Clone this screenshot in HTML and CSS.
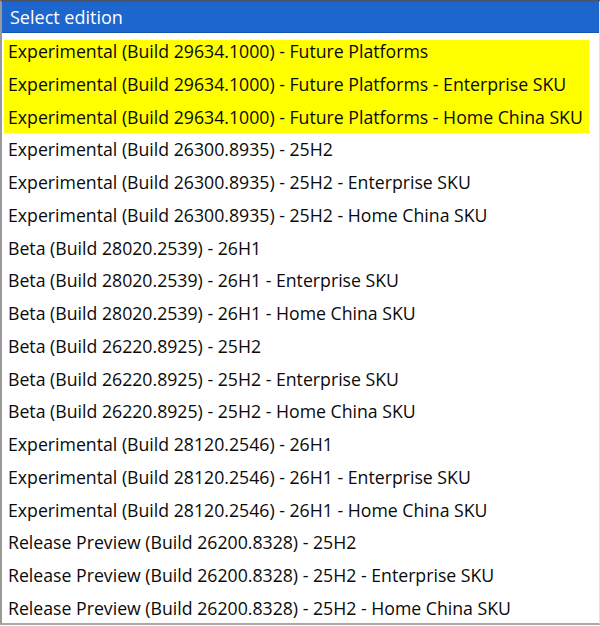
FILE: index.html
```html
<!DOCTYPE html>
<html lang="en">
<head>
    <meta charset="UTF-8">
    <meta name="viewport" content="width=device-width, initial-scale=1.0">
    <title>Select edition</title>
    <link rel="stylesheet" href="styles.css">
</head>
<body>
    <div class="picker">
        <div class="picker-title">Select edition</div>
        <ul class="edition-list">
            <li class="edition marked">Experimental (Build 29634.1000) - Future Platforms</li>
            <li class="edition marked">Experimental (Build 29634.1000) - Future Platforms - Enterprise SKU</li>
            <li class="edition marked">Experimental (Build 29634.1000) - Future Platforms - Home China SKU</li>
            <li class="edition">Experimental (Build 26300.8935) - 25H2</li>
            <li class="edition">Experimental (Build 26300.8935) - 25H2 - Enterprise SKU</li>
            <li class="edition">Experimental (Build 26300.8935) - 25H2 - Home China SKU</li>
            <li class="edition">Beta (Build 28020.2539) - 26H1</li>
            <li class="edition">Beta (Build 28020.2539) - 26H1 - Enterprise SKU</li>
            <li class="edition">Beta (Build 28020.2539) - 26H1 - Home China SKU</li>
            <li class="edition">Beta (Build 26220.8925) - 25H2</li>
            <li class="edition">Beta (Build 26220.8925) - 25H2 - Enterprise SKU</li>
            <li class="edition">Beta (Build 26220.8925) - 25H2 - Home China SKU</li>
            <li class="edition">Experimental (Build 28120.2546) - 26H1</li>
            <li class="edition">Experimental (Build 28120.2546) - 26H1 - Enterprise SKU</li>
            <li class="edition">Experimental (Build 28120.2546) - 26H1 - Home China SKU</li>
            <li class="edition">Release Preview (Build 26200.8328) - 25H2</li>
            <li class="edition">Release Preview (Build 26200.8328) - 25H2 - Enterprise SKU</li>
            <li class="edition">Release Preview (Build 26200.8328) - 25H2 - Home China SKU</li>
        </ul>
    </div>
</body>
</html>
```

FILE: styles.css
```css
/* Page */
body {
    margin: 0;
    background: #ffffff;
    font-family: 'Open Sans', 'Noto Sans', sans-serif;
    color: #0a0a0a;
}

/* Dropdown box */
.picker {
    width: 600px;
    height: 625px;
    box-sizing: border-box;
    border-top: 2px solid #4d5565;
    border-left: 2px solid #9a9a9a;
    border-bottom: 2px solid #a8a8a8;
    border-right: 1px solid #e4e4e4;
    overflow: hidden;
}

.picker-title {
    height: 29px;
    margin-left: -2px;
    padding: 1px 0 0 8px;
    background: #1d66cd;
    border-bottom: 1px solid #1556b0;
    border-left: 2px solid #3a4150;
    color: #ffffff;
    font-size: 18px;
    line-height: 29px;
}

/* Option rows */
.edition-list {
    list-style: none;
    margin: 0;
    padding: 2px 10px 0 2px;
}

.edition {
    height: 32.75px;
    padding-left: 4px;
    font-size: 17.7px;
    line-height: 32.75px;
    white-space: nowrap;
}

.edition.marked {
    background: #ffff00;
}

/* the highlight starts a little below the first row's top */
.edition.marked:first-child {
    background: linear-gradient(to bottom, #ffffff 5px, #ffff00 5px);
}
```
